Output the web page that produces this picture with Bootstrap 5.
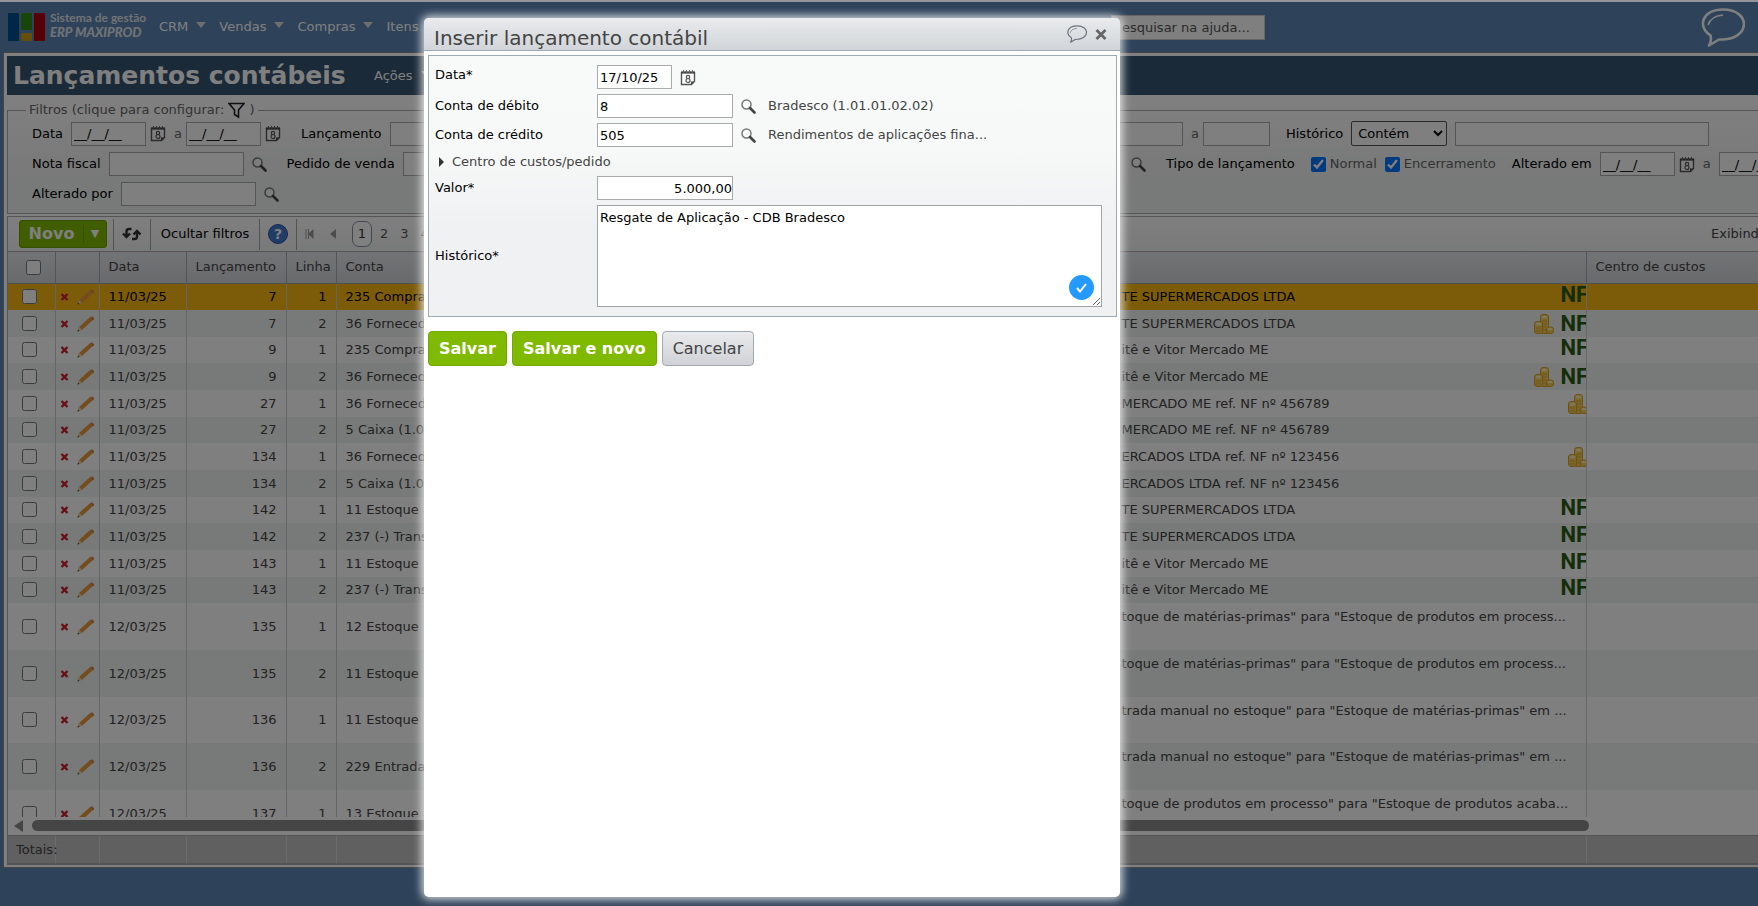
<!DOCTYPE html>
<html lang="pt-BR">
<head>
<meta charset="utf-8">
<meta name="viewport" content="width=device-width, initial-scale=1">
<title>Lançamentos contábeis</title>
<link href="https://cdn.jsdelivr.net/npm/bootstrap@5.3.0/dist/css/bootstrap.min.css" rel="stylesheet">
<style>
body{font-family:"DejaVu Sans",Verdana,sans-serif;font-size:13px;line-height:18px;color:#444;background:#5c84b4;border-top:2px solid #94949c}
.topbar{height:50px;padding-right:13px}
.topbar a{color:#fff;text-decoration:none}
.brandlink{width:151px}
.brandbars{width:38px;height:28px}
.brandtext{font-family:Lato,sans-serif;font-weight:700;font-size:12px;line-height:14px;color:#e0e4ea;padding-bottom:4px}
.brandtext em{font-weight:900;font-size:13px}
.menus{gap:13px}
.tri{width:0;height:0;border:5px solid transparent;border-top:6px solid #ddd;border-bottom:0;margin-bottom:4px}
.helpsearch{width:154px;height:25px;border:1px solid #c8ccd0;padding:0 10px;background:#fff}
.helpsearch::placeholder{color:#555;opacity:1}
.gap-help{width:436px}
.panel{margin:0 0 38px 3px;border:1px solid #888;border-right:0;padding:3px 0 2px 3px;background:#fff;min-height:0}
.titlebar{height:39px;background:#365470;padding-left:6px}
.titlebar h1{font-size:25px;line-height:36px;font-weight:700;color:#fff;margin:0;width:361px}
.filters{margin:4px 0 0;border:1px solid #aaa;border-right:0;padding:0 0 5px 24px;background:linear-gradient(#fff,#f2f4f3 50%,#f0f4f2)}
.filters legend{float:none;width:auto;font-size:13px;line-height:22px;height:22px;margin:0 0 0 -6px;padding:0 3px;color:#666}
.frow{height:24px;white-space:nowrap}
.frow.tallrow{height:25px;margin-bottom:6px}
.frow label{color:#000}
.frow .plain{color:#666}
.fstart{width:1084px;flex:none;overflow:hidden}
.fstart2{width:1091px;flex:none;overflow:hidden}
.box{height:24px;border:1px solid #aaa;padding:0 2px;background:#fff;color:#000;border-radius:0;flex:none}
.w-date{width:75px}.w-code{width:135px}.w-num{width:67px}.w-hist{width:254px}
.sel{width:96px;height:25px;border:1px solid #555;border-radius:2px;background:#fff;padding:0 2px;color:#000}
input[type=checkbox]{width:15px;height:15px;margin:0;flex:none;display:block}
.toolbar{height:36px;margin-top:2px;border:1px solid #aaa;border-width:1px 0 1px 1px;background:linear-gradient(#fff,#f2f3f4)}
.toolbar .cellbox{height:31px;border-right:1px solid #a0a4ac}
.toolbar .cellbox.wide{width:109px}
.toolbar .cellbox.first{padding:0 6px 0 11px}
.novo{height:28px;border:1px solid #6a9c00;border-radius:3px;background:#80ba00;color:#fff;font-weight:700;font-size:16px;padding:0}
.novo span:first-child{width:63px}.novo span:last-child{width:23px;border-left:1px solid #6a9c00;font-size:11px}
.linkbtn{background:none;border:0;padding:0;color:#000}
.pg{width:20px;height:26px;border:1px solid #888fa0;border-radius:7px;background:#fff;color:#333}
.toolbar a{color:#555;text-decoration:none}
.showing{width:47px}
.gridarea{border-left:1px solid #aaa;min-height:0;overflow:hidden;flex:1 1 0}
.ledger{width:100%;table-layout:fixed;border-collapse:collapse;margin:0}
.ledger th,.ledger td{font-weight:400;padding:0 9px;border-right:1px solid #c8cccf;overflow:hidden;white-space:nowrap;vertical-align:middle}
.ledger th:last-child,.ledger td:last-child{border-right:0}
.ledger thead th{height:31px;background:linear-gradient(#e6e8ec,#d2d4d8);border-right-color:#a4a8b0;border-bottom:1px solid #a0a4ac}
.ledger thead th:first-child{padding-left:18px}
.ledger tbody td{height:27px;line-height:18px}
.ledger tbody tr:nth-child(3n) td{height:26px}
.ledger tbody tr.tall td{height:47px}
.ledger tbody tr.tall:nth-child(3n) td{height:46px}
.ledger tbody tr:nth-child(even){background:#f0f4f2}
.ledger tbody tr.hot{background:#fbb812;color:#000}
.ledger td.chk{padding:0 0 1px 14px}
.ledger td.act{padding:0 5px 0 4px}
.ledger td.his{padding-right:0}
.his div{gap:7px}
.tall td.his{vertical-align:top}
.tall td.his div{margin-top:5px}
.c-chk{width:47px}.c-act{width:44px}.c-date{width:87px}.c-num{width:100px}.c-line{width:50px}.c-acc{width:776px}.c-his{width:474px}.c-both{width:1250px}
.r{text-align:right}
.nf{width:25px;overflow:hidden;font:700 22px/24px "Liberation Sans Narrow","Roboto",sans-serif;color:#285c14;flex:none}
.nf.solo{line-height:20px;padding-bottom:4px}
.coincut{width:18px;overflow:hidden;flex:none}
.scrollrow{height:18px;border-left:1px solid #aaa;padding:0 0 1px 6px}
.thumb{width:1557px;height:11px;border-radius:6px;background:#8a8a8a}
.totals{height:30px;border:solid #a4a8b0;border-width:1px 0 2px 1px;background:#c0c0c0}
.totals .ledger td{height:27px;padding:0 8px;border-right-color:#d8d8d8}
.totals td:first-child{overflow:visible}
.shade{position:absolute;inset:0;background:rgba(0,0,0,.5)}
.dialogbox{position:absolute;left:424px;top:16px;bottom:9px;width:696px;background:#fff;border-radius:5px;box-shadow:0 0 10px 2px rgba(255,255,255,.85)}
.dialoghead{height:33px;border-bottom:1px solid #a0a8b0;border-radius:5px 5px 0 0;background:linear-gradient(#e9ebed,#d1d5d9);padding:0 13px 0 10px}
.dialoghead h2{font-size:20px;line-height:40px;height:33px;margin:0;color:#444}
.dialoghead button{background:none;border:0;padding:0;display:block}
.entry{margin:4px 3px 0 4px;padding:9px 14px 9px 6px;border:1px solid #a0a8b0;background:linear-gradient(#f8faf9,#f7f9f8 35%,#f0f1f3 65%);gap:5px}
.entry label{width:162px;flex:none;color:#000}
.entry .w-code{width:136px}
.entry textarea{height:102px;border:1px solid #a0a4a8;padding:3px 2px;color:#000;background:#fff;flex:1;line-height:17px;display:block}
.subrow{height:19px}
.okmark{position:absolute;right:8px;bottom:7px}
.actions{gap:5px;margin-top:14px}
.actbtn{height:35px;border:1px solid #72a800;border-radius:4px;background:#80ba00;color:#fff;font-weight:700;font-size:16px;line-height:20px;padding:0 10px}
.actbtn.alt{background:linear-gradient(#e8eaec,#d0d2d6);border-color:#a0a8b0;color:#444;font-weight:400}
svg{flex:none;display:block}
</style>
</head>
<body class="vh-100 d-flex flex-column overflow-hidden position-relative">

<svg class="d-none">
  <symbol id="cal" viewBox="0 0 16 17"><path d="M1.500 3.500h13v9l-3 3h-10z" fill="#fff" stroke="#555" stroke-width="1.400"/><path d="M11 15.500v-3h3.500z" fill="#444"/><path d="M1 3.500h14" stroke="#444" stroke-width="2"/><path d="M3.500 1v3M6.500 1v3M9.500 1v3M12.500 1v3" stroke="#666"/><circle cx="8" cy="8" r="1.700" fill="none" stroke="#555" stroke-width="1.200"/><circle cx="8" cy="11.500" r="2" fill="none" stroke="#555" stroke-width="1.200"/></symbol>
  <symbol id="mag" viewBox="0 0 15 15"><circle cx="5.500" cy="5.500" r="4.500" fill="#fff" fill-opacity=".5" stroke="#777" stroke-width="1.500"/><path d="M9 9l4.500 4.500" stroke="#444" stroke-width="2.600" stroke-linecap="round"/></symbol>
  <symbol id="del" viewBox="0 0 9 8"><path d="M1.500 1l6 6M7.500 1l-6 6" stroke="#c8202c" stroke-width="2.400"/></symbol>
  <symbol id="pen" viewBox="0 0 17 16"><path d="M3.500 12.500L14.500 2.500" stroke="#e8983c" stroke-width="4.200"/><path d="M13 1.500q2-2 3.500 0t-.5 3z" fill="#d08850"/><path d="M.500 15.500l1.300-5 3.400 3.600z" fill="#ecd0a8"/><path d="M.500 15.500l.6-2 1.400 1.400z" fill="#444"/></symbol>
  <symbol id="coins" viewBox="0 0 20 20"><g fill="#f8cc54" stroke="#d8a430"><rect x="6.500" y=".500" width="8" height="19" rx="2.500"/><rect x=".500" y="7.500" width="8" height="12" rx="2.500"/><rect x="12.500" y="13" width="7" height="6.500" rx="2.500"/></g><g fill="#fff0b8"><ellipse cx="10.500" cy="3" rx="3" ry="1.500"/><ellipse cx="4.500" cy="10" rx="3" ry="1.500"/><ellipse cx="16" cy="15" rx="2.500" ry="1.200"/></g><path d="M8 7h5M8 10h5M8 13h4M8 16h4M2 14h5M2 17h5" stroke="#e0ac38"/></symbol>
  <symbol id="bubble" viewBox="0 0 44 39"><path d="M9.500 27.500C-4 19 1 1.500 22 1.500c29 0 28 31.500-4 30L8 37.500c2-3 2.500-6 1.500-10z" fill="none" stroke="currentColor" stroke-width="2.600" stroke-linejoin="round"/><path d="M7 17q3-9 15-10" fill="none" stroke="currentColor" stroke-width="1.600"/></symbol>
</svg>

<nav class="topbar d-flex align-items-center flex-shrink-0">
  <a href="#" class="brandlink d-flex align-items-center">
    <svg class="brandbars ms-2" viewBox="0 0 38 28"><rect width="11" height="28" rx="1" fill="#00508c"/><rect x="13" width="11" height="17" rx="1" fill="#308c10"/><rect x="13" y="20" width="11" height="8" rx="1" fill="#c89c10"/><rect x="26" width="11" height="28" rx="1" fill="#b00010"/></svg>
    <span class="brandtext d-flex flex-column ps-1 text-nowrap"><span>Sistema de gestão</span><em>ERP MAXIPROD</em></span>
  </a>
  <div class="menus d-flex text-nowrap ps-2">
    <a href="#" class="d-flex align-items-center gap-2">CRM <i class="tri"></i></a>
    <a href="#" class="d-flex align-items-center gap-2">Vendas <i class="tri"></i></a>
    <a href="#" class="d-flex align-items-center gap-2">Compras <i class="tri"></i></a>
    <a href="#" class="d-flex align-items-center gap-2">Itens <i class="tri"></i></a>
  </div>
  <input class="helpsearch ms-auto" type="text" placeholder="esquisar na ajuda..." aria-label="Pesquisar na ajuda">
  <span class="gap-help"></span>
  <a href="#" aria-label="Mensagens"><svg width="44" height="39"><use href="#bubble"/></svg></a>
</nav>

<main class="panel d-flex flex-column flex-grow-1">
  <header class="titlebar d-flex align-items-center flex-shrink-0">
    <h1 class="text-nowrap">Lançamentos contábeis</h1>
    <a href="#" class="d-flex align-items-center gap-2 text-white text-decoration-none">Ações <i class="tri"></i></a>
  </header>

  <fieldset class="filters flex-shrink-0">
    <legend class="d-flex align-items-center">Filtros (clique para configurar:&nbsp; <svg width="17" height="17" viewBox="0 0 17 17"><path d="M1 1.500h15l-5.500 6.500v7l-4-2.500V8z" fill="#fff" stroke="#222" stroke-width="1.600"/></svg>&nbsp;)</legend>
    <div class="frow tallrow d-flex align-items-center">
      <div class="fstart d-flex align-items-center">
        <label for="d1" class="pe-2">Data</label><input id="d1" class="box w-date" value="__/__/__"><svg class="ms-1" width="16" height="17"><use href="#cal"/></svg>
        <label for="d2" class="plain ps-2 pe-1">a</label><input id="d2" class="box w-date" value="__/__/__"><svg class="ms-1" width="16" height="17"><use href="#cal"/></svg>
        <label for="l1" class="ps-3 ms-1 pe-2">Lançamento</label><input id="l1" class="box w-num">
      </div>
      <input class="box w-num" aria-label="Valor inicial"><label for="v2" class="plain ps-2 pe-1">a</label><input id="v2" class="box w-num">
      <label for="h1" class="ps-3 pe-2">Histórico</label>
      <select id="h1" class="sel" aria-label="Operador"><option>Contém</option></select>
      <input class="box w-hist ms-2" aria-label="Texto do histórico">
    </div>
    <div class="frow d-flex align-items-center">
      <div class="fstart2 d-flex align-items-center">
        <label for="n1" class="pe-2">Nota fiscal</label><input id="n1" class="box w-code"><svg class="ms-2" width="15" height="15"><use href="#mag"/></svg>
        <label for="p1" class="ps-3 ms-1 pe-2">Pedido de venda</label><input id="p1" class="box w-code">
      </div>
      <svg class="ms-2" width="15" height="15"><use href="#mag"/></svg>
      <span class="ps-3 ms-1 pe-3 text-black">Tipo de lançamento</span>
      <input id="t1" type="checkbox" checked><label for="t1" class="plain ps-1 pe-2">Normal</label>
      <input id="t2" type="checkbox" checked><label for="t2" class="plain ps-1 pe-3">Encerramento</label>
      <label for="a1" class="pe-2">Alterado em</label><input id="a1" class="box w-date" value="__/__/__"><svg class="ms-1" width="16" height="17"><use href="#cal"/></svg>
      <label for="a2" class="plain ps-2 pe-2">a</label><input id="a2" class="box w-date" value="__/__/__">
    </div>
    <div class="frow d-flex align-items-center mt-1 pt-1 mb-1">
      <label for="ap" class="pe-2">Alterado por</label><input id="ap" class="box w-code"><svg class="ms-2" width="15" height="15"><use href="#mag"/></svg>
    </div>
  </fieldset>

  <div class="toolbar d-flex align-items-center flex-shrink-0 text-nowrap">
    <div class="cellbox first d-flex align-items-center">
      <button class="novo d-flex align-items-center"><span>Novo</span><span>▼</span></button>
    </div>
    <div class="cellbox d-flex align-items-center px-2">
      <button class="linkbtn" aria-label="Atualizar"><svg width="20" height="14" viewBox="0 0 20 14" fill="none" stroke="#333" stroke-width="2.400"><path d="M9.500 2H7Q4.500 2 4.500 4.500V9M1 6.500L4.500 10 8 6.500M10 12h2.500Q15 12 15 9.500V5M11.500 7.500L15 4l3.500 3.500"/></svg></button>
    </div>
    <div class="cellbox wide d-flex align-items-center justify-content-center"><button class="linkbtn">Ocultar filtros</button></div>
    <div class="cellbox d-flex align-items-center px-2">
      <button class="linkbtn" aria-label="Ajuda"><svg width="20" height="20" viewBox="0 0 20 20"><circle cx="10" cy="10" r="9.500" fill="#4478d0" stroke="#2850a0"/><text x="10" y="15" text-anchor="middle" font-size="14" font-weight="700" fill="#fff">?</text></svg></button>
    </div>
    <svg class="ms-2" width="9" height="10"><path d="M1 0v10M3.500 0v10" stroke="#999"/><path d="M8.500 0v10L3 5z" fill="#999"/></svg>
    <svg class="ms-3" width="6" height="10"><path d="M6 0v10L0 5z" fill="#999"/></svg>
    <button class="pg ms-3 p-0">1</button>
    <a href="#" class="ps-2">2</a>
    <a href="#" class="ps-2 ms-1">3</a>
    <a href="#" class="ps-2 ms-1">4</a>
    <span class="showing ms-auto overflow-hidden">Exibindo</span>
  </div>

  <div class="gridarea">
    <table class="ledger">
      <colgroup><col class="c-chk"><col class="c-act"><col class="c-date"><col class="c-num"><col class="c-line"><col class="c-acc"><col class="c-his"><col></colgroup>
      <thead><tr><th><input type="checkbox" aria-label="Selecionar todos"></th><th></th><th>Data</th><th>Lançamento</th><th>Linha</th><th>Conta</th><th></th><th>Centro de custos</th></tr></thead>
      <tbody id="rows"></tbody>
    </table>
  </div>
  <div class="scrollrow d-flex align-items-center flex-shrink-0">
    <svg width="10" height="12"><path d="M9 0v12L0 6z" fill="#8a8a8a"/></svg><div class="thumb ms-2"></div>
  </div>
  <div class="totals flex-shrink-0">
    <table class="ledger">
      <colgroup><col class="c-chk"><col class="c-act"><col class="c-date"><col class="c-num"><col class="c-line"><col class="c-both"><col></colgroup>
      <tr><td>Totais:</td><td></td><td></td><td></td><td></td><td></td><td></td></tr>
    </table>
  </div>
</main>

<div class="shade"></div>

<section class="dialogbox" role="dialog" aria-labelledby="dlgt">
  <div class="dialoghead d-flex align-items-center">
    <h2 id="dlgt" class="fw-normal me-auto">Inserir lançamento contábil</h2>
    <button aria-label="Comentário" class="me-2 text-secondary"><svg width="20" height="18"><use href="#bubble"/></svg></button>
    <button aria-label="Fechar"><svg width="12" height="11" viewBox="0 0 12 11"><path d="M1.500 1l9 9M10.500 1l-9 9" stroke="#666" stroke-width="2.800"/></svg></button>
  </div>
  <form class="entry d-flex flex-column">
    <div class="d-flex align-items-center"><label for="fd" class="pb-1">Data*</label><input id="fd" class="box w-date" value="17/10/25"><svg class="ms-2" width="16" height="17"><use href="#cal"/></svg></div>
    <div class="d-flex align-items-center"><label for="fc">Conta de débito</label><input id="fc" class="box w-code" value="8"><svg class="ms-2" width="15" height="15"><use href="#mag"/></svg><span class="ps-2 ms-1">Bradesco (1.01.01.02.02)</span></div>
    <div class="d-flex align-items-center"><label for="fr">Conta de crédito</label><input id="fr" class="box w-code" value="505"><svg class="ms-2" width="15" height="15"><use href="#mag"/></svg><span class="ps-2 ms-1">Rendimentos de aplicações fina...</span></div>
    <div class="subrow d-flex align-items-center"><svg class="mx-1" width="5" height="10"><path d="M0 0v10L5 5z" fill="#333"/></svg><a href="#" class="text-reset text-decoration-none ps-1">Centro de custos/pedido</a></div>
    <div class="d-flex align-items-center"><label for="fv">Valor*</label><input id="fv" class="box w-code r pe-0" value="5.000,00"></div>
    <div class="d-flex align-items-center position-relative"><label for="fh">Histórico*</label><textarea id="fh">Resgate de Aplicação - CDB Bradesco</textarea>
      <svg class="okmark" width="25" height="25" viewBox="0 0 25 25"><circle cx="12.500" cy="12.500" r="12.500" fill="#2499ff"/><path d="M8 13l3 3.500L17 9" fill="none" stroke="#fff" stroke-width="2"/></svg></div>
  </form>
  <div class="actions d-flex ps-1">
    <button class="actbtn">Salvar</button><button class="actbtn">Salvar e novo</button><button class="actbtn alt">Cancelar</button>
  </div>
</section>

<script src="https://cdn.jsdelivr.net/npm/bootstrap@5.3.0/dist/js/bootstrap.bundle.min.js"></script>
<script>
const d = [
 ['11/03/25',7,1,'235 Compras','TE SUPERMERCADOS LTDA','n'],
 ['11/03/25',7,2,'36 Fornecedores','TE SUPERMERCADOS LTDA','cn'],
 ['11/03/25',9,1,'235 Compras','itê e Vitor Mercado ME','n'],
 ['11/03/25',9,2,'36 Fornecedores','itê e Vitor Mercado ME','cn'],
 ['11/03/25',27,1,'36 Fornecedores','MERCADO ME ref. NF nº 456789','c'],
 ['11/03/25',27,2,'5 Caixa (1.01)','MERCADO ME ref. NF nº 456789',''],
 ['11/03/25',134,1,'36 Fornecedores','ERCADOS LTDA ref. NF nº 123456','c'],
 ['11/03/25',134,2,'5 Caixa (1.01)','ERCADOS LTDA ref. NF nº 123456',''],
 ['11/03/25',142,1,'11 Estoque','TE SUPERMERCADOS LTDA','n'],
 ['11/03/25',142,2,'237 (-) Transferências','TE SUPERMERCADOS LTDA','n'],
 ['11/03/25',143,1,'11 Estoque','itê e Vitor Mercado ME','n'],
 ['11/03/25',143,2,'237 (-) Transferências','itê e Vitor Mercado ME','n'],
 ['12/03/25',135,1,'12 Estoque','toque de matérias-primas" para "Estoque de produtos em process...','t'],
 ['12/03/25',135,2,'11 Estoque','toque de matérias-primas" para "Estoque de produtos em process...','t'],
 ['12/03/25',136,1,'11 Estoque','trada manual no estoque" para "Estoque de matérias-primas" em ...','t'],
 ['12/03/25',136,2,'229 Entradas','trada manual no estoque" para "Estoque de matérias-primas" em ...','t'],
 ['12/03/25',137,1,'13 Estoque','toque de produtos em processo" para "Estoque de produtos acaba...','t']
];
const coin = '<svg width="20" height="20"><use href="#coins"/></svg>';
const icons = {n:'<span class="nf solo">NF</span>', cn:coin+'<span class="nf">NF</span>', c:'<span class="coincut">'+coin+'</span>', '':'', t:''};
document.getElementById('rows').innerHTML = d.map((r,i)=>`<tr class="${i?'':'hot'} ${r[5]=='t'?'tall':''}"><td class="chk"><input type="checkbox" aria-label="Selecionar linha ${i+1}"></td><td class="act"><div class="d-flex align-items-center justify-content-between"><svg width="9" height="8"><use href="#del"/></svg><svg width="17" height="16"><use href="#pen"/></svg></div></td><td>${r[0]}</td><td class="r">${r[1]}</td><td class="r">${r[2]}</td><td>${r[3]}</td><td class="his"><div class="d-flex align-items-center"><span class="me-auto">${r[4]}</span>${icons[r[5]]}</div></td><td></td></tr>`).join('');
</script>
</body>
</html>
